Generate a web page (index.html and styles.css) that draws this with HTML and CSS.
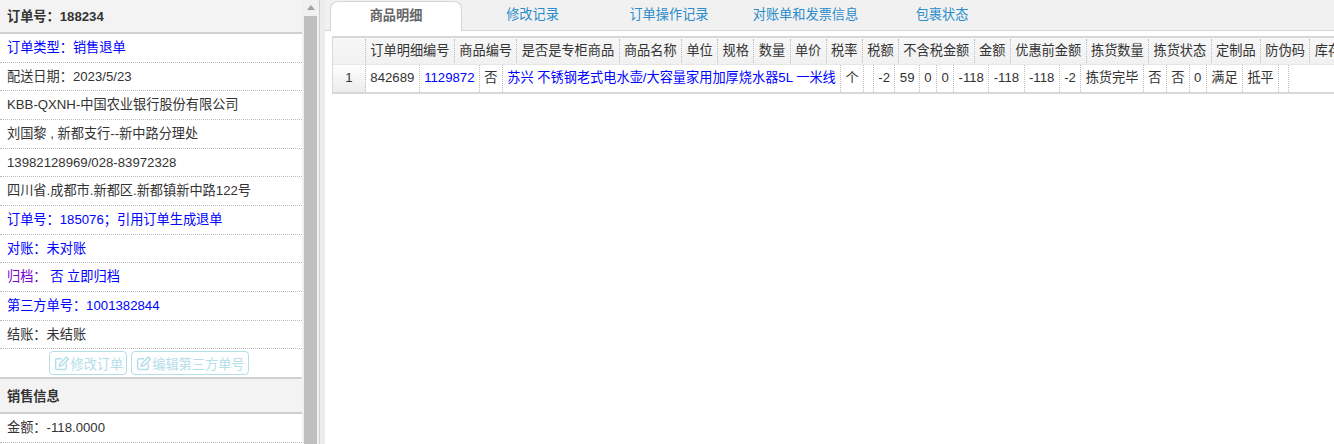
FILE: index.html
```html
<!DOCTYPE html>
<html lang="zh-CN">
<head>
  <meta charset="UTF-8" />
  <title>订单详情</title>
  <link rel="stylesheet" href="styles.css">
</head>
<body>

  <!-- Left: order info -->
  <aside class="side">
    <div class="side-title">订单号：188234</div>
    <div class="side-row blue">订单类型：销售退单</div>
    <div class="side-row">配送日期：2023/5/23</div>
    <div class="side-row">KBB-QXNH-中国农业银行股份有限公司</div>
    <div class="side-row">刘国黎 , 新都支行--新中路分理处</div>
    <div class="side-row">13982128969/028-83972328</div>
    <div class="side-row">四川省.成都市.新都区.新都镇新中路122号</div>
    <div class="side-row blue">订单号：185076；引用订单生成退单</div>
    <div class="side-row blue">对账：未对账</div>
    <div class="side-row"><span class="purple">归档：</span> <span class="blue">否 立即归档</span></div>
    <div class="side-row blue">第三方单号：1001382844</div>
    <div class="side-row">结账：未结账</div>
    <div class="side-actions">
      <a class="btn-edit">
        <svg viewBox="0 0 14 14" width="15" height="15" fill="none" stroke="currentColor" stroke-width="1.4"><path d="M7.5 2.5H3a1.5 1.5 0 0 0-1.5 1.5v7A1.5 1.5 0 0 0 3 12.5h7a1.5 1.5 0 0 0 1.5-1.5V7"/><path d="M5 9.5l.5-2.5 6-6 2 2-6 6z"/></svg>修改订单
      </a>
      <a class="btn-edit">
        <svg viewBox="0 0 14 14" width="15" height="15" fill="none" stroke="currentColor" stroke-width="1.4"><path d="M7.5 2.5H3a1.5 1.5 0 0 0-1.5 1.5v7A1.5 1.5 0 0 0 3 12.5h7a1.5 1.5 0 0 0 1.5-1.5V7"/><path d="M5 9.5l.5-2.5 6-6 2 2-6 6z"/></svg>编辑第三方单号
      </a>
    </div>
    <div class="side-title second">销售信息</div>
    <div class="side-row">金额：-118.0000</div>
  </aside>

  <!-- Fake scrollbar + splitter -->
  <div class="scrollbar"><span class="arrow"></span><span class="thumb"></span></div>
  <div class="splitter"></div>

  <!-- Right: tabs + detail -->
  <main class="detail">
    <nav class="tabs">
      <a class="tab active">商品明细</a>
      <a class="tab">修改记录</a>
      <a class="tab">订单操作记录</a>
      <a class="tab">对账单和发票信息</a>
      <a class="tab">包裹状态</a>
    </nav>
    <div class="grid-wrap">
      <div class="grid">
        <div class="grid-head">
          <span class="no"></span>
          <span>订单明细编号</span><span>商品编号</span><span>是否是专柜商品</span><span>商品名称</span>
          <span>单位</span><span>规格</span><span>数量</span><span>单价</span><span>税率</span><span>税额</span>
          <span>不含税金额</span><span>金额</span><span>优惠前金额</span><span>拣货数量</span><span>拣货状态</span>
          <span>定制品</span><span>防伪码</span><span>库存数量</span>
        </div>
        <div class="grid-row">
          <span class="no">1</span>
          <span>842689</span><span class="blue">1129872</span><span>否</span>
          <span class="blue">苏兴 不锈钢老式电水壶/大容量家用加厚烧水器5L 一米线</span>
          <span>个</span><span></span><span>-2</span><span>59</span><span>0</span><span>0</span>
          <span>-118</span><span>-118</span><span>-118</span><span>-2</span><span>拣货完毕</span>
          <span>否</span><span>否</span><span>0</span><span>满足</span><span>抵平</span><span></span>
        </div>
      </div>
    </div>
  </main>

</body>
</html>
```

FILE: styles.css
```css
/* Base */
* { margin: 0; padding: 0; box-sizing: border-box; }
html, body { height: 100%; overflow: hidden; }
body {
  display: flex;
  font-family: "Liberation Sans", "Noto Sans CJK SC", sans-serif;
  font-size: 13.2px;
  color: #333;
  background: #fff;
}
.blue { color: #0000ff; }
.purple { color: #7a00d6; }

/* Left panel */
.side { width: 302px; flex: none; overflow: hidden; }
.side-title {
  height: 34px;
  padding-left: 7px;
  line-height: 33px;
  font-weight: bold;
  background: #f3f3f3;
  border-bottom: 2px solid #d0d0d0;
}
.side-title.second {
  height: 37px;
  line-height: 35px;
  border-top: 2px solid #d0d0d0;
}
.side-row {
  height: 28.67px;
  padding-left: 7px;
  line-height: 27px;
  white-space: nowrap;
  border-bottom: 1px dotted #bbb;
}
.side-actions {
  height: 28px;
  display: flex;
  justify-content: center;
  gap: 4px;
  padding: 2px 4px 0 0;
}
.btn-edit {
  display: flex;
  align-items: center;
  gap: 1px;
  height: 24px;
  padding: 0 3px 0 4px;
  color: #b3deea;
  border: 1px solid #b3deea;
  border-radius: 4px;
}

/* Scrollbar and splitter */
.scrollbar {
  width: 15px;
  flex: none;
  display: flex;
  flex-direction: column;
  align-items: flex-end;
  background: #f1f1f1;
}
.arrow {
  width: 13px;
  height: 16px;
  display: flex;
  justify-content: center;
  padding-top: 5px;
}
.arrow::before {
  content: "";
  border-left: 4px solid transparent;
  border-right: 4px solid transparent;
  border-bottom: 5px solid #a3a3a3;
  height: 0;
}
.thumb { width: 13px; flex: 1; background: #bfbfbf; }
.splitter {
  width: 8px;
  flex: none;
  background: #ececec;
  border-left: 2px solid #f1f1f1;
}
.splitter::before {
  content: "";
  display: block;
  width: 1px;
  height: 100%;
  background: #cfcfcf;
}

/* Tabs */
.detail { flex: 1; min-width: 0; overflow: hidden; }
.tabs {
  display: flex;
  gap: 4.5px;
  height: 31px;
  padding: 1px 0 0 5px;
  background: #f1f1f1;
  border-bottom: 1px solid #d6d6d6;
}
.tab {
  width: 132px;
  flex: none;
  height: 29px;
  text-align: center;
  line-height: 27px;
  white-space: nowrap;
  color: #2a8ccb;
}
.tab.active {
  height: 30px;
  color: #666;
  font-weight: bold;
  background: #fff;
  border: 1px solid #d6d6d6;
  border-bottom: none;
  border-radius: 8px 8px 0 0;
}

/* Detail grid */
.grid-wrap { padding: 5px 0 0 7px; }
.grid {
  width: 1100px;
  overflow: hidden;
  border: 1px solid #d8d8d8;
  border-top-width: 2px;
  border-bottom-width: 2px;
}
.grid-head, .grid-row {
  display: flex;
  white-space: nowrap;
}
.grid-head {
  height: 27px;
  background: linear-gradient(#f7f7f7, #f1f1f1);
  border-bottom: 1px solid #e6e6e6;
}
.grid-row { height: 27px; line-height: 26px; }
.grid-head span, .grid-row span {
  flex: none;
  padding: 0 4.4px;
  box-sizing: content-box;
  border-right: 1px dotted #bbb;
}
.grid-head span { height: 24px; margin-top: 1px; line-height: 24px; }
.grid-head .no, .grid-row .no {
  width: 23.2px;
  text-align: center;
}
.grid-row .no { background: linear-gradient(#fff, #ececec); }
```
